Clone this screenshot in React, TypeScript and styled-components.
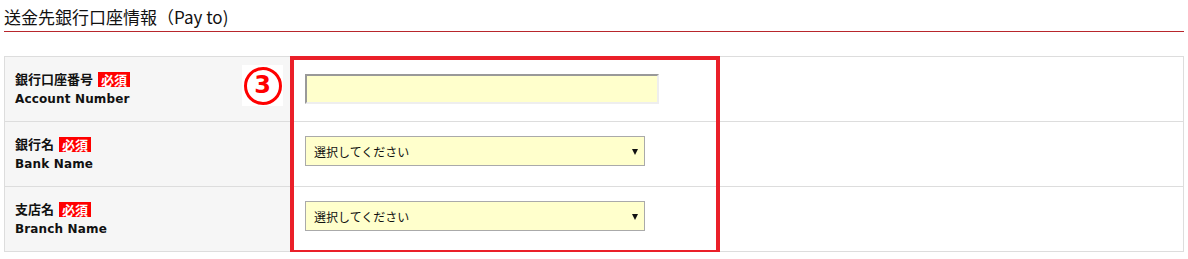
import React from "react";
import styled, { createGlobalStyle } from "styled-components";

const Global = createGlobalStyle`
  html, body { margin: 0; padding: 0; background: #ffffff; }
  body { font-family: "Noto Sans CJK JP", "DejaVu Sans", sans-serif; color: #111; }
`;

const Page = styled.div`
  padding: 0 4px;
  width: 1180px;
`;

const Title = styled.h2`
  margin: 0;
  padding: 5px 0 2px 0;
  font-size: 17px;
  line-height: 24px;
  font-weight: normal;
  color: #111;
  border-bottom: 1px solid #b8262c;
`;

const FormWrap = styled.div`
  position: relative;
  margin-top: 24px;
`;

const Table = styled.table`
  width: 100%;
  border-collapse: collapse;
  table-layout: fixed;
`;

const Row = styled.tr`
  height: 65px;
`;

const LabelCell = styled.th`
  box-sizing: border-box;
  width: 286px;
  background: #f6f6f6;
  border: 1px solid #dddddd;
  text-align: left;
  vertical-align: top;
  padding: 12px 0 0 10px;
  font-weight: bold;
`;

const ValueCell = styled.td<{ $top: number }>`
  border: 1px solid #dddddd;
  background: #ffffff;
  vertical-align: top;
  padding: ${(p) => p.$top}px 0 0 14px;
`;

const JpLine = styled.div`
  display: flex;
  align-items: center;
  gap: 5px;
  font-family: "Noto Sans CJK JP", sans-serif;
  font-size: 13px;
  line-height: 20px;
  color: #111;
`;

const Badge = styled.span`
  display: inline-block;
  background: #ff0000;
  color: #ffffff;
  font-family: "Noto Sans CJK JP", sans-serif;
  font-size: 13px;
  font-weight: bold;
  line-height: 15px;
  height: 15px;
  padding: 0 3px;
`;

const EnLine = styled.div`
  font-family: "DejaVu Sans", sans-serif;
  font-size: 12px;
  line-height: 20px;
  font-weight: bold;
  letter-spacing: 0.15px;
  color: #111;
`;

const TextInput = styled.input`
  box-sizing: border-box;
  display: block;
  width: 354px;
  height: 30px;
  margin: 0;
  background: #ffffcc;
  border-style: solid;
  border-width: 2px;
  border-color: #999999 #eeeeee #eeeeee #999999;
  outline: none;
  padding: 0 6px;
`;

const SelectWrap = styled.div`
  position: relative;
  width: 340px;
  height: 30px;
  &::after {
    content: "";
    position: absolute;
    right: 7px;
    top: 13px;
    border-left: 3px solid transparent;
    border-right: 3px solid transparent;
    border-top: 6px solid #111;
    pointer-events: none;
  }
`;

const Select = styled.select`
  appearance: none;
  -webkit-appearance: none;
  box-sizing: border-box;
  width: 100%;
  height: 30px;
  margin: 0;
  padding: 0 24px 0 8px;
  background: #ffffcc;
  border: 1px solid #aaaaaa;
  border-radius: 0;
  font-family: "Noto Sans CJK JP", sans-serif;
  font-size: 12px;
  color: #111;
  outline: none;
`;

const Highlight = styled.div`
  position: absolute;
  left: 286px;
  top: 0;
  width: 430px;
  height: 198px;
  box-sizing: border-box;
  border: 4px solid #ea1f29;
  pointer-events: none;
`;

const StepMarker = styled.div`
  position: absolute;
  left: 238px;
  top: 9px;
  width: 41px;
  height: 41px;
  background: #ffffff;
  display: flex;
  align-items: center;
  justify-content: center;
`;

const StepCircle = styled.div`
  box-sizing: border-box;
  width: 38px;
  height: 38px;
  border: 3px solid #ff0000;
  border-radius: 50%;
  display: flex;
  align-items: center;
  justify-content: center;
  color: #ff0000;
  font-family: "DejaVu Sans", sans-serif;
  font-weight: bold;
  font-size: 24px;
  line-height: 1;
  padding-bottom: 1px;
`;

type Field = {
  jp: string;
  en: string;
  kind: "input" | "select";
};

const fields: Field[] = [
  { jp: "銀行口座番号", en: "Account Number", kind: "input" },
  { jp: "銀行名", en: "Bank Name", kind: "select" },
  { jp: "支店名", en: "Branch Name", kind: "select" },
];

export default function App() {
  return (
    <>
      <Global />
      <Page>
        <Title>送金先銀行口座情報（Pay to)</Title>
        <FormWrap>
          <Table>
            <tbody>
              {fields.map((f) => (
                <Row key={f.en}>
                  <LabelCell>
                    <JpLine>
                      {f.jp}
                      <Badge>必須</Badge>
                    </JpLine>
                    <EnLine>{f.en}</EnLine>
                  </LabelCell>
                  <ValueCell $top={f.kind === "input" ? 17 : 14}>
                    {f.kind === "input" ? (
                      <TextInput type="text" />
                    ) : (
                      <SelectWrap>
                        <Select defaultValue="">
                          <option value="">選択してください</option>
                        </Select>
                      </SelectWrap>
                    )}
                  </ValueCell>
                </Row>
              ))}
            </tbody>
          </Table>
          <Highlight />
          <StepMarker>
            <StepCircle>3</StepCircle>
          </StepMarker>
        </FormWrap>
      </Page>
    </>
  );
}
